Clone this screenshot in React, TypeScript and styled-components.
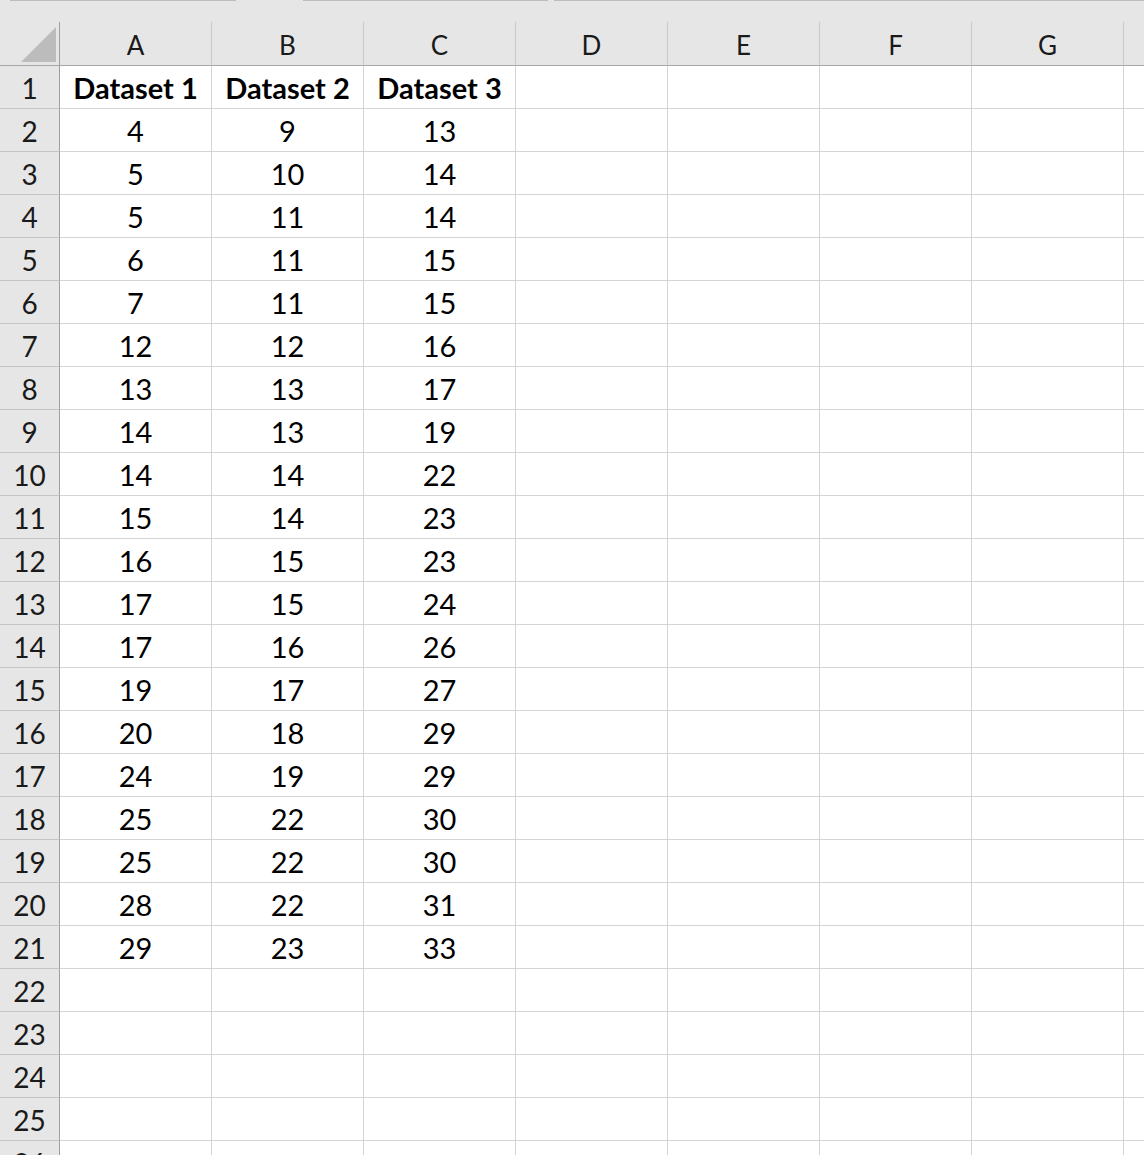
import React from 'react';
import styled, { createGlobalStyle } from 'styled-components';

const GlobalStyle = createGlobalStyle`
  html, body {
    margin: 0;
    padding: 0;
    background: #ffffff;
  }

  body {
    width: 1144px;
    height: 1155px;
    overflow: hidden;
    font-family: Lato, 'Open Sans', sans-serif;
    color: #000000;
  }
`;

const Sheet = styled.div`
  width: 1144px;
  height: 1155px;
  overflow: hidden;
  display: flex;
  flex-direction: column;
`;

const TabStrip = styled.div`
  height: 22px;
  flex: none;
  display: flex;
  background: #e6e6e6;
`;

const TabEdge = styled.div<{ $width: number; $offset: number }>`
  flex: none;
  width: ${(p) => p.$width}px;
  margin-left: ${(p) => p.$offset}px;
  height: 1px;
  background: #bdbdbd;
`;

const Grid = styled.div`
  display: grid;
  grid-template-columns: 60px repeat(8, 152px);
  grid-template-rows: 44px;
  grid-auto-rows: 43px;
  width: max-content;
`;

const Corner = styled.div`
  box-sizing: border-box;
  background: #e6e6e6;
  border-right: 1px solid #9e9e9e;
  border-bottom: 1px solid #a6a6a6;
  display: flex;
  align-items: flex-end;
  justify-content: flex-end;
  padding: 0 3px 3px 0;
`;

const ColHeader = styled.div`
  box-sizing: border-box;
  padding-top: 1px;
  background: #e6e6e6;
  border-right: 1px solid #c9c9c9;
  border-bottom: 1px solid #a6a6a6;
  text-align: center;
  font-size: 26px;
  line-height: 45px;
  color: #1a1a1a;
`;

const RowHeader = styled.div`
  box-sizing: border-box;
  background: #e6e6e6;
  border-right: 1px solid #9e9e9e;
  border-bottom: 1px solid #c4c4c4;
  text-align: center;
  font-size: 28px;
  line-height: 44px;
  color: #1a1a1a;
`;

const Cell = styled.div<{ $bold?: boolean }>`
  box-sizing: border-box;
  border-right: 1px solid #d4d4d4;
  border-bottom: 1px solid #d4d4d4;
  text-align: center;
  font-size: 29px;
  line-height: 44px;
  font-weight: ${(p) => (p.$bold ? 700 : 400)};
  white-space: nowrap;
  overflow: hidden;
`;

// H only peeks in at the right edge, so its label is left out
const columns = ['A', 'B', 'C', 'D', 'E', 'F', 'G', ''];

const data: number[][] = [
  [4, 9, 13],
  [5, 10, 14],
  [5, 11, 14],
  [6, 11, 15],
  [7, 11, 15],
  [12, 12, 16],
  [13, 13, 17],
  [14, 13, 19],
  [14, 14, 22],
  [15, 14, 23],
  [16, 15, 23],
  [17, 15, 24],
  [17, 16, 26],
  [19, 17, 27],
  [20, 18, 29],
  [24, 19, 29],
  [25, 22, 30],
  [25, 22, 30],
  [28, 22, 31],
  [29, 23, 33],
];

const ROW_COUNT = 26;

const App: React.FC = () => {
  const rows: (string | number)[][] = [['Dataset 1', 'Dataset 2', 'Dataset 3'], ...data];

  return (
    <>
      <GlobalStyle />
      <Sheet>
        <TabStrip>
          <TabEdge $offset={10} $width={226} />
          <TabEdge $offset={67} $width={245} />
          <TabEdge $offset={6} $width={590} />
        </TabStrip>
        <Grid>
          <Corner>
            <svg width="35" height="35" viewBox="0 0 35 35">
              <polygon points="35,0 35,35 0,35" fill="#bcbcbc" />
            </svg>
          </Corner>
          {columns.map((c, ci) => (
            <ColHeader key={ci}>{c}</ColHeader>
          ))}
          {Array.from({ length: ROW_COUNT }, (_, r) => (
            <React.Fragment key={r}>
              <RowHeader>{r + 1}</RowHeader>
              {columns.map((_c, ci) => {
                const value = rows[r]?.[ci];
                return (
                  <Cell key={ci} $bold={r === 0}>
                    {value ?? ''}
                  </Cell>
                );
              })}
            </React.Fragment>
          ))}
        </Grid>
      </Sheet>
    </>
  );
};

export default App;
